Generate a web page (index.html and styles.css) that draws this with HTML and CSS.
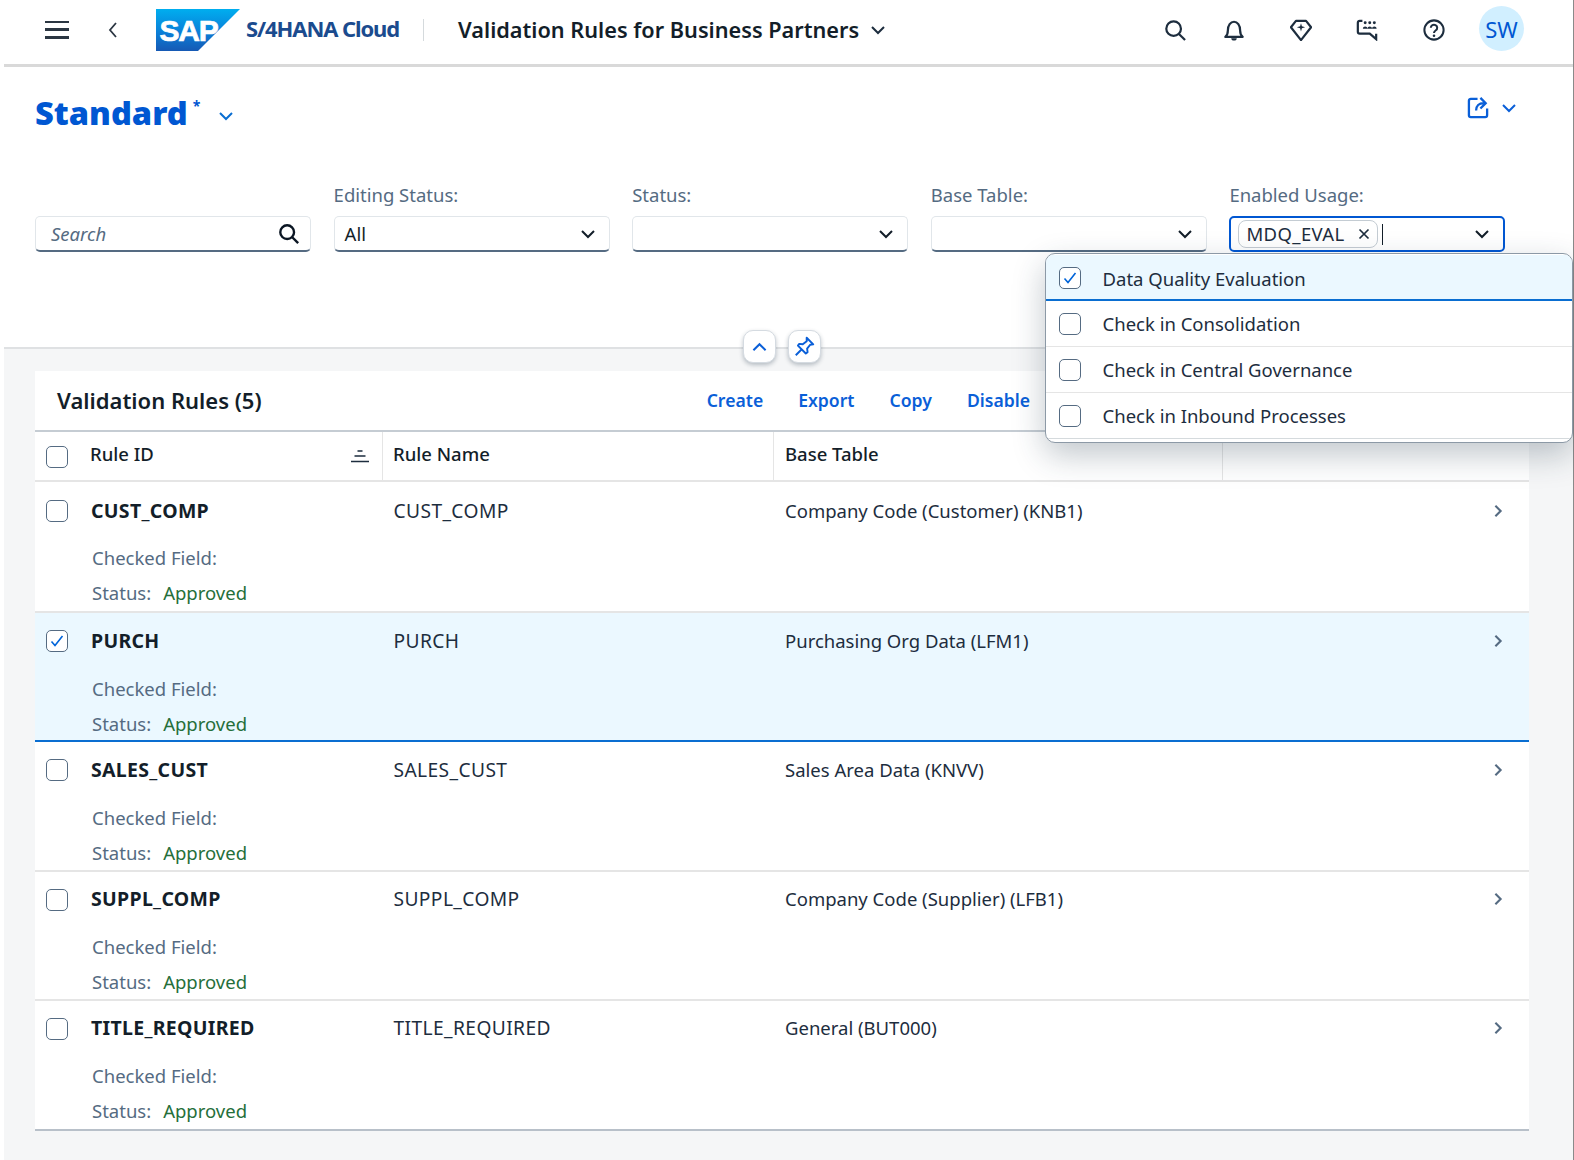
FILE: index.html
```html
<!DOCTYPE html>
<html lang="en">
<head>
<meta charset="utf-8">
<title>Validation Rules for Business Partners</title>
<link rel="stylesheet" href="styles.css">
</head>
<body>
<svg class="sprite" aria-hidden="true">
  <symbol id="chev-down" viewBox="0 0 16 16"><path d="M2 5l6 6 6-6" fill="none" stroke="currentColor" stroke-width="2"/></symbol>
  <symbol id="chev-right" viewBox="0 0 16 16"><path d="M5 2l6 6-6 6" fill="none" stroke="currentColor" stroke-width="2.4"/></symbol>
  <symbol id="check" viewBox="0 0 16 16"><path d="M2.500 8.500l3.500 4 7.500-9.500" fill="none" stroke="currentColor" stroke-width="1.6"/></symbol>
</svg>
<div class="app">
  <header class="shell">
    <button class="menu" aria-label="Menu"><span></span><span></span><span></span></button>
    <svg class="back" viewBox="0 0 12 20"><path d="M9 3L3 10l6 7" fill="none" stroke="#2b3642" stroke-width="1.8"/></svg>
    <svg class="logo" viewBox="0 0 84 42">
      <defs><linearGradient id="sapg" x1="0" y1="0" x2="0" y2="1"><stop offset="0" stop-color="#00aeef"/><stop offset=".55" stop-color="#0a7fd8"/><stop offset="1" stop-color="#1659b4"/></linearGradient></defs>
      <path d="M0 0H84L42 42H0Z" fill="url(#sapg)"/>
      <text x="3.500" y="32" class="logo-text">SAP</text>
    </svg>
    <span class="product">S/4HANA Cloud</span>
    <span class="shell-sep"></span>
    <span class="app-title">Validation Rules for Business Partners</span>
    <svg class="title-chev"><use href="#chev-down"/></svg>
    <div class="shell-actions">
      <svg class="sh-icon ic-search" viewBox="0 0 24 24"><circle cx="10.500" cy="10.500" r="8" fill="none" stroke="#1d2d3e" stroke-width="2.400"/><path d="M16 16L23 23" stroke="#1d2d3e" stroke-width="2.400"/></svg>
      <svg class="sh-icon ic-bell" viewBox="0 0 24 24"><path d="M2.500 19.500c2-1.500 2.800-3 2.800-7 0-5.500 3-9.500 6.700-9.500s6.700 4 6.700 9.500c0 4 .8 5.500 2.800 7z" fill="none" stroke="#1d2d3e" stroke-width="2.400" stroke-linejoin="round"/><path d="M9 21h6a3 2.500 0 0 1-6 0z" fill="#1d2d3e"/></svg>
      <svg class="sh-icon ic-gem" viewBox="0 0 24 24"><path d="M6.500 2h11L23 9 12 23 1 9z" fill="none" stroke="#1d2d3e" stroke-width="2.400" stroke-linejoin="round"/><path d="M12 4.500l1 3.500 3.500 1-3.500 1-1 3.500-1-3.500-3.500-1 3.500-1z" fill="#1d2d3e"/></svg>
      <svg class="sh-icon ic-chat" viewBox="0 0 24 24"><path d="M7 2H4a2 2 0 0 0-2 2v10a2 2 0 0 0 2 2h11l7 6v-6" fill="none" stroke="#1d2d3e" stroke-width="2.400"/><g fill="#1d2d3e"><circle cx="10" cy="4" r="1.600"/><circle cx="15" cy="4" r="1.600"/><circle cx="20" cy="4" r="1.600"/><path d="M7.500 10.500c0-3 5-3 5 0zM12.500 10.500c0-3 5-3 5 0zM17.500 10.500c0-3 5-3 5 0z"/></g></svg>
      <svg class="sh-icon ic-help" viewBox="0 0 24 24"><circle cx="12" cy="12" r="10.500" fill="none" stroke="#1d2d3e" stroke-width="2.200"/><path d="M8.500 9.500a3.500 3.300 0 1 1 5.500 2.800c-1.300.9-2 1.500-2 2.900" fill="none" stroke="#1d2d3e" stroke-width="2.200"/><circle cx="12" cy="18.300" r="1.400" fill="#1d2d3e"/></svg>
      <span class="avatar">SW</span>
    </div>
  </header>

  <section class="filterbar">
    <div class="variant-row">
      <h1 class="variant">Standard</h1><span class="star">*</span>
      <svg class="variant-chev"><use href="#chev-down"/></svg>
      <div class="share">
        <svg class="share-icon" viewBox="0 0 24 24"><path d="M11 3H4a2 2 0 0 0-2 2V20a2 2 0 0 0 2 2h15a2 2 0 0 0 2-2v-7" fill="none" stroke="currentColor" stroke-width="2.400"/><path d="M9.500 15c0-5 3-7.500 8-7.500M14 2l5.500 5.500-5.500 5.500" fill="none" stroke="currentColor" stroke-width="2.400"/></svg>
        <svg class="share-chev"><use href="#chev-down"/></svg>
      </div>
    </div>
    <div class="filters">
      <div class="filter">
        <label class="flabel">&nbsp;</label>
        <div class="field"><span class="placeholder">Search</span>
          <svg class="field-icon" viewBox="0 0 24 24"><circle cx="10" cy="10" r="7.500" fill="none" stroke="#0b1623" stroke-width="2.600"/><path d="M15 15l7 7" stroke="#0b1623" stroke-width="2.600"/></svg></div>
      </div>
      <div class="filter">
        <label class="flabel">Editing Status:</label>
        <div class="field"><span class="value">All</span><svg class="field-chev"><use href="#chev-down"/></svg></div>
      </div>
      <div class="filter">
        <label class="flabel">Status:</label>
        <div class="field"><span class="value"></span><svg class="field-chev"><use href="#chev-down"/></svg></div>
      </div>
      <div class="filter">
        <label class="flabel">Base Table:</label>
        <div class="field"><span class="value"></span><svg class="field-chev"><use href="#chev-down"/></svg></div>
      </div>
      <div class="filter">
        <label class="flabel">Enabled Usage:</label>
        <div class="field focused">
          <span class="token">MDQ_EVAL<svg class="token-x" viewBox="0 0 12 12"><path d="M1.500 1.500l9 9M10.500 1.500l-9 9" stroke="#1d2d3e" stroke-width="1.700"/></svg></span>
          <span class="caret"></span>
          <svg class="field-chev"><use href="#chev-down"/></svg>
        </div>
      </div>
    </div>
    <div class="collapse-btns">
      <button class="round-btn" aria-label="Collapse"><svg class="up" viewBox="0 0 16 16"><path d="M1.500 12L8 5.500l6.500 6.500" fill="none" stroke="#0a5fd8" stroke-width="2.200"/></svg></button>
      <button class="round-btn" aria-label="Pin"><svg class="pin" viewBox="0 0 24 24"><path d="M14.500 2l7.500 7.500-3.500.5-3.500 4.500.5 4-2 1.500-9-9 1.500-2 4 .5 4.500-3.500zM8 16l-6 6" fill="none" stroke="#0a5fd8" stroke-width="2.200" stroke-linejoin="round"/></svg></button>
    </div>
  </section>

  <main class="content">
    <section class="panel">
      <div class="toolbar">
        <h2 class="tbl-title">Validation Rules (5)</h2>
        <div class="tb-actions"><a>Create</a><a>Export</a><a>Copy</a><a>Disable</a></div>
      </div>
      <div class="row head">
        <div class="cell c1"><span class="cb"></span><span class="th">Rule ID</span>
          <svg class="sort" viewBox="0 0 20 14"><path d="M7.500 2h5M4.500 7h11M1 12.500h18" stroke="#1d2d3e" stroke-width="1.300"/></svg></div>
        <div class="cell c2"><span class="th">Rule Name</span></div>
        <div class="cell c3"><span class="th">Base Table</span></div>
        <div class="cell c4"></div>
      </div>
      <article class="row item first">
        <div class="main"><span class="cb"></span><b class="rid">CUST_COMP</b><span class="c2t">CUST_COMP</span><span class="c3t">Company Code (Customer) (KNB1)</span><svg class="go"><use href="#chev-right"/></svg></div>
        <div class="sub">Checked Field:</div>
        <div class="sub">Status:<span class="ok">Approved</span></div>
      </article>
      <article class="row item selected">
        <div class="main"><span class="cb on"><svg><use href="#check"/></svg></span><b class="rid">PURCH</b><span class="c2t">PURCH</span><span class="c3t">Purchasing Org Data (LFM1)</span><svg class="go"><use href="#chev-right"/></svg></div>
        <div class="sub">Checked Field:</div>
        <div class="sub">Status:<span class="ok">Approved</span></div>
      </article>
      <article class="row item">
        <div class="main"><span class="cb"></span><b class="rid">SALES_CUST</b><span class="c2t">SALES_CUST</span><span class="c3t">Sales Area Data (KNVV)</span><svg class="go"><use href="#chev-right"/></svg></div>
        <div class="sub">Checked Field:</div>
        <div class="sub">Status:<span class="ok">Approved</span></div>
      </article>
      <article class="row item">
        <div class="main"><span class="cb"></span><b class="rid">SUPPL_COMP</b><span class="c2t">SUPPL_COMP</span><span class="c3t">Company Code (Supplier) (LFB1)</span><svg class="go"><use href="#chev-right"/></svg></div>
        <div class="sub">Checked Field:</div>
        <div class="sub">Status:<span class="ok">Approved</span></div>
      </article>
      <article class="row item last">
        <div class="main"><span class="cb"></span><b class="rid">TITLE_REQUIRED</b><span class="c2t">TITLE_REQUIRED</span><span class="c3t">General (BUT000)</span><svg class="go"><use href="#chev-right"/></svg></div>
        <div class="sub">Checked Field:</div>
        <div class="sub">Status:<span class="ok">Approved</span></div>
      </article>
    </section>
  </main>

  <div class="popover">
    <div class="opt selected"><span class="cb on"><svg><use href="#check"/></svg></span>Data Quality Evaluation</div>
    <div class="opt"><span class="cb"></span>Check in Consolidation</div>
    <div class="opt"><span class="cb"></span>Check in Central Governance</div>
    <div class="opt"><span class="cb"></span>Check in Inbound Processes</div>
  </div>
</div>
</body>
</html>
```

FILE: styles.css
```css
* { box-sizing: border-box; }
html, body { margin: 0; height: 100%; overflow: hidden; background: #fff; }
body { font-family: "Noto Sans", "Open Sans", sans-serif; font-size: 18px; color: #1d2d3e; }
.sprite { display: none; }
svg { display: block; flex: none; }
button { font: inherit; padding: 0; }

.app { position: relative; height: 1160px; margin-left: 4px; border-right: 1px solid #8a8a8a; display: flex; flex-direction: column; }

.shell { height: 67px; flex: none; display: flex; align-items: center; border-bottom: 3px solid #d9d9d9; padding-left: 41px; padding-bottom: 5px; }
.menu { width: 24px; height: 18px; border: 0; background: none; display: flex; flex-direction: column; justify-content: space-between; margin-right: 38px; }
.menu span { height: 2.500px; background: #2b3642; display: block; }
.back { width: 12px; height: 20px; margin-right: 37px; }
.logo { width: 84px; height: 42px; margin-right: 6px; }
.logo-text { font-family: "Liberation Sans", sans-serif; font-weight: 700; font-size: 30px; fill: #fff; stroke: #fff; stroke-width: .7px; letter-spacing: -1.200px; }
.product { font-weight: 700; font-size: 22px; color: #1b4b8e; letter-spacing: -1.100px; white-space: nowrap; margin-bottom: 3px; }
.shell-sep { width: 1px; height: 22px; background: #d5dadd; margin: 0 34px 0 24px; }
.app-title { font-weight: 600; font-size: 21.700px; color: #131e29; white-space: nowrap; }
.title-chev { width: 16px; height: 16px; margin-left: 11px; color: #1d2d3e; }
.shell-actions { margin-left: auto; margin-right: 49px; display: flex; align-items: center; }
.sh-icon { width: 22px; height: 22px; }
.ic-search { margin-right: 37px; }
.ic-bell { margin-right: 45px; }
.ic-gem { margin-right: 44px; }
.ic-chat { margin-right: 45px; }
.ic-help { margin-right: 34.500px; }
.avatar { width: 45px; height: 45px; margin-bottom: 2px; border-radius: 50%; background: #d1efff; color: #0057d2; display: flex; align-items: center; justify-content: center; font-size: 22px; }

.filterbar { position: relative; height: 282px; flex: none; border-bottom: 2px solid #dfe1e3; padding: 0 31px; }
.variant-row { display: flex; align-items: flex-start; height: 117px; padding-top: 26px; }
.variant { margin: 0; font-size: 32.600px; font-weight: 900; color: #0057d2; line-height: 40px; }
.star { font-size: 14px; color: #0057d2; margin-left: 5px; line-height: 26px; font-weight: 700; }
.variant-chev { width: 16px; height: 16px; color: #0a6ed1; margin: 15px 0 0 18px; }
.share { margin-left: auto; display: flex; align-items: center; gap: 11px; padding-right: 25px; color: #0a5fd8; margin-top: 3px; }
.share-icon { width: 23px; height: 23px; }
.share-chev { width: 16px; height: 16px; }

.filters { display: grid; grid-template-columns: repeat(5, 276px); column-gap: 22.600px; }
.flabel { display: block; height: 32px; color: #556b82; font-size: 18.500px; line-height: 22px; }
.field { position: relative; height: 36px; display: flex; align-items: center; justify-content: space-between; background: #fff; border: 1px solid #e1e6ea; border-bottom: 2px solid #556b82; border-radius: 5px; padding: 0 10px; }
.placeholder { font-style: italic; color: #556b82; font-size: 18.500px; padding-left: 5px; }
.value { font-size: 18.500px; color: #131e29; }
.field-icon { width: 22px; height: 22px; }
.field-chev { width: 16px; height: 16px; color: #131e29; margin-right: 3px; }
.field.focused { border: 2px solid #0057d2; padding: 0 10px 0 7px; }
.field.focused .field-chev { margin-left: auto; }
.token { display: flex; align-items: center; gap: 13px; height: 28px; border: 1px solid #c4ccd3; border-radius: 8px; padding: 0 7px 1px; font-size: 18.500px; color: #1d2d3e; background: #fff; white-space: nowrap; letter-spacing: .4px; }
.token-x { width: 12px; height: 12px; }
.caret { width: 1.500px; height: 21px; background: #131e29; margin-left: 4px; }

.collapse-btns { position: absolute; top: 263px; left: 739px; display: flex; gap: 12px; }
.round-btn { width: 33px; height: 33px; border: 1px solid #d5dbe1; border-radius: 10px; background: #fff; box-shadow: 0 2px 4px rgba(34,53,72,.3); display: flex; align-items: center; justify-content: center; }
.up { width: 15px; height: 15px; }
.pin { width: 21px; height: 21px; }

.content { flex: 1; background: #f5f6f7; padding: 22px 44px 0 31px; }
.panel { background: #fff; border-bottom: 2px solid #b8c0c9; }
.toolbar { height: 61px; display: flex; align-items: center; justify-content: space-between; border-bottom: 2px solid #c5ccd3; padding: 0 0 2px 22px; }
.tbl-title { margin: 0; font-size: 22px; font-weight: 600; color: #131e29; }
.tb-actions { display: flex; gap: 35px; margin-right: 499px; }
.tb-actions a { color: #0a5fd8; font-weight: 600; font-size: 17.600px; }

.row { position: relative; }
.head { height: 50px; display: flex; border-bottom: 2px solid #e5e5e5; }
.cell { position: relative; display: flex; align-items: center; height: 100%; padding-left: 11px; padding-bottom: 6px; border-right: 1px solid #e5e5e5; }
.c1 { width: 348px; gap: 22px; }
.c2 { width: 391px; padding-left: 10px; }
.c3 { width: 449px; }
.c4 { flex: 1; border-right: 0; }
.c1 .cb { margin-top: 8px; }
.th { font-weight: 500; font-size: 18.500px; color: #131e29; }
.sort { width: 20px; height: 14px; position: absolute; right: 12px; top: 17px; }

.cb { width: 22px; height: 22px; flex: none; display: inline-block; background: #fff; border: 1.500px solid #556b82; border-radius: 5px; color: #0064d9; }
.cb svg { width: 16px; height: 16px; margin: 1.500px; }

.item { height: 129.250px; border-bottom: 2px solid #e5e5e5; }
.item.first { height: 131px; padding-top: 1px; }
.item.selected { background: #ebf8ff; border-bottom-color: #0a6ed1; }
.item.last { border-bottom: 0; height: 128px; }
.main { height: 54px; margin-bottom: 3.500px; display: grid; grid-template-columns: 45px 302.500px 391.500px 1fr 38px; align-items: center; padding: 0 0 0 11px; }
.first .main { margin-bottom: 2.500px; }
.main .cb { margin-top: 2px; }
.rid { font-weight: 700; font-size: 19.500px; color: #131e29; letter-spacing: .3px; }
.c2t { font-size: 19.200px; color: #1d2d3e; letter-spacing: .4px; }
.c3t { font-size: 18.500px; color: #1d2d3e; }
.go { width: 14px; height: 14px; color: #556b82; margin-top: 1px; }
.sub { height: 35px; padding-left: 57px; color: #556b82; font-size: 18.500px; line-height: 35px; }
.ok { color: #256f3a; margin-left: 12px; }

.popover { position: absolute; left: 1041px; top: 253px; width: 527.500px; padding: 1px 0 2.500px; background: #fff; border: 1px solid #8c99a6; border-radius: 10px; box-shadow: 0 12px 32px rgba(34,53,72,.28); overflow: hidden; z-index: 5; }
.opt { height: 46px; display: flex; align-items: center; gap: 21.500px; padding-left: 13px; font-size: 18.500px; color: #1d2d3e; border-bottom: 1px solid #e5e5e5; }
.opt:last-child { border-bottom: 1px solid #d5dadd; }
.opt.selected { background: #ebf8ff; border-bottom: 2px solid #0a6ed1; padding-top: 2px; }
```
